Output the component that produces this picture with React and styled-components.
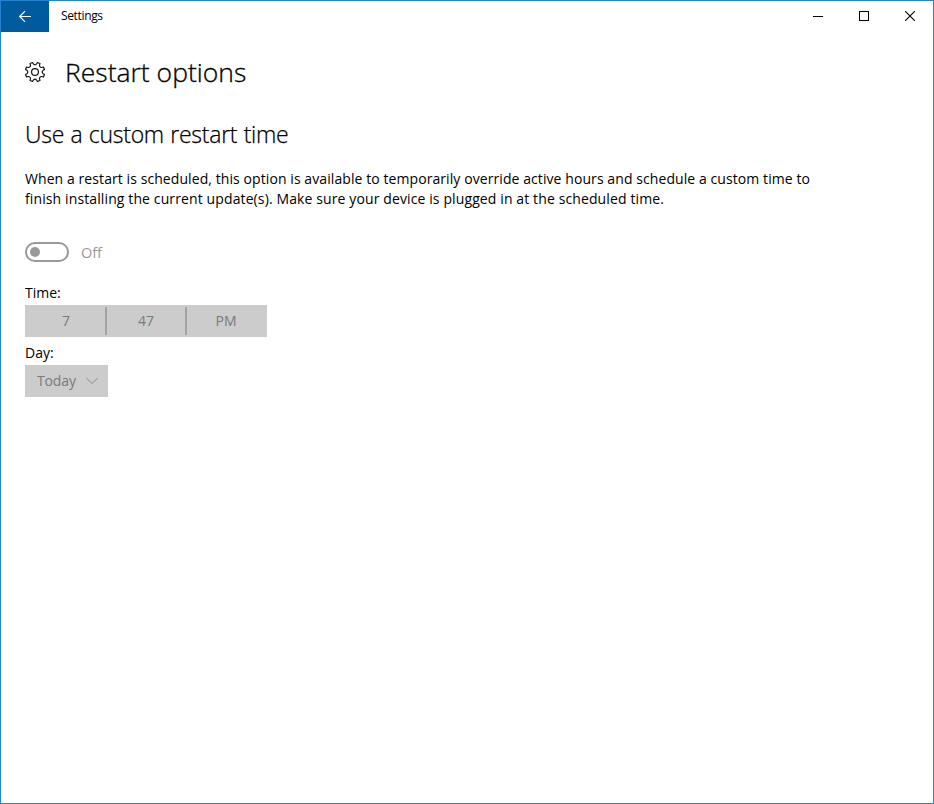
import React from "react";
import styled, { createGlobalStyle } from "styled-components";

const GlobalStyle = createGlobalStyle`
  * { box-sizing: border-box; }
  body { margin: 0; background: #fff; }
`;

const Window = styled.div`
  width: 934px;
  height: 804px;
  border: 1px solid #2583d3;
  background: #fff;
  color: #000;
  font-family: "Open Sans", "Noto Sans", sans-serif;
  overflow: hidden;
`;

const TitleBar = styled.header`
  display: flex;
  height: 31px;
`;

const BackButton = styled.button`
  display: flex;
  align-items: center;
  justify-content: center;
  width: 48px;
  height: 31px;
  padding: 0 0 2px;
  border: 0;
  background: #005a9e;
`;

const WindowTitle = styled.div`
  flex: 1;
  padding-left: 12px;
  font-size: 12px;
  line-height: 30px;
  letter-spacing: -0.35px;
`;

const CaptionButton = styled.button`
  display: flex;
  align-items: center;
  justify-content: center;
  width: 46px;
  height: 30px;
  padding: 0;
  border: 0;
  background: transparent;
`;

const Content = styled.main`
  padding: 20px 24px 0;
`;

const PageHeader = styled.div`
  display: flex;
  align-items: center;
  height: 40px;
  gap: 20px;
`;

const PageTitle = styled.h1`
  margin: 0;
  font-size: 26.5px;
  font-weight: 300;
  line-height: 40px;
  -webkit-text-stroke: 0.3px #000;
  white-space: nowrap;
`;

const SectionTitle = styled.h2`
  margin: 26px 0 0;
  font-size: 23px;
  font-weight: 300;
  line-height: 32px;
  letter-spacing: -0.27px;
  word-spacing: 0.7px;
  -webkit-text-stroke: 0.25px #000;
  white-space: nowrap;
`;

const Description = styled.p`
  margin: 19px 0 0;
  font-size: 14px;
  line-height: 20px;
`;

const Line = styled.span`
  display: block;
  width: max-content;
  white-space: nowrap;
  letter-spacing: ${(p) => p.$tracking};
`;

const ToggleRow = styled.div`
  display: flex;
  align-items: center;
  height: 20px;
  margin-top: 33px;
  gap: 12px;
`;

const Toggle = styled.div`
  display: flex;
  align-items: center;
  width: 44px;
  height: 20px;
  padding-left: 3px;
  border: 2px solid #999;
  border-radius: 10px;
`;

const Knob = styled.div`
  width: 10px;
  height: 10px;
  border-radius: 50%;
  background: #999;
`;

const ToggleLabel = styled.span`
  padding-top: 2px;
  color: #999;
  font-size: 14.5px;
  line-height: 20px;
  letter-spacing: -0.1px;
`;

const FieldLabel = styled.div`
  height: 20px;
  margin-top: ${(p) => p.$top}px;
  font-size: 14px;
  line-height: 20px;
`;

const TimePicker = styled.div`
  display: flex;
  align-items: center;
  width: 242px;
  height: 32px;
  margin-top: 2px;
  background: #ccc;
`;

const TimePart = styled.div`
  flex: 0 0 ${(p) => p.$width}px;
  padding: ${(p) => p.$inset || "0"};
  color: #7a7a7a;
  font-size: 14px;
  line-height: 32px;
  text-align: center;
  letter-spacing: -0.1px;
`;

const Divider = styled.div`
  width: 2px;
  height: 28px;
  background: #a3a3a3;
`;

const DaySelect = styled.div`
  display: flex;
  align-items: center;
  justify-content: space-between;
  width: 83px;
  height: 32px;
  margin-top: 2px;
  padding: 0 10px 0 12px;
  background: #ccc;
  color: #7a7a7a;
  font-size: 14px;
  line-height: 32px;
  letter-spacing: -0.15px;
`;

const toothPath = () => {
  const at = (r, deg) => {
    const a = (deg * Math.PI) / 180;
    return `${(10 + r * Math.sin(a)).toFixed(2)} ${(10 - r * Math.cos(a)).toFixed(2)}`;
  };
  let d = "";
  for (let i = 0; i < 8; i += 1) {
    const c = i * 45 + 22.5;
    d += `${i ? "L" : "M"}${at(9.8, c - 8)} L${at(9.8, c + 8)} L${at(8.2, c + 11)} Q${at(6.3, c + 22.5)} ${at(8.2, c + 34)} `;
  }
  return `${d}Z`;
};

const Gear = () => (
  <svg width="20" height="20" viewBox="0 0 20 20" fill="none" stroke="#111" strokeWidth="1.15" strokeLinejoin="round" overflow="visible">
    <path d={toothPath()} />
    <circle cx="10" cy="10" r="3.4" />
  </svg>
);

const BackArrow = () => (
  <svg width="12" height="12" viewBox="0 0 12 12" fill="none" stroke="#fff" strokeWidth="1.2">
    <path d="M12 6.5H.8M6 1.2.7 6.5 6 11.8" />
  </svg>
);

export default function App() {
  return (
    <>
      <GlobalStyle />
      <Window>
        <TitleBar>
          <BackButton aria-label="Back"><BackArrow /></BackButton>
          <WindowTitle>Settings</WindowTitle>
          <CaptionButton aria-label="Minimize">
            <svg width="10" height="10" shapeRendering="crispEdges"><path d="M0 5.5H10" stroke="#000" /></svg>
          </CaptionButton>
          <CaptionButton aria-label="Maximize">
            <svg width="10" height="10" shapeRendering="crispEdges"><path d="M.5.5h9v9h-9z" fill="none" stroke="#000" /></svg>
          </CaptionButton>
          <CaptionButton aria-label="Close">
            <svg width="10" height="10"><path d="M0 0 10 10M10 0 0 10" stroke="#000" strokeWidth="1.1" /></svg>
          </CaptionButton>
        </TitleBar>
        <Content>
          <PageHeader>
            <Gear />
            <PageTitle>Restart options</PageTitle>
          </PageHeader>
          <SectionTitle>Use a custom restart time</SectionTitle>
          <Description>
            <Line $tracking="0.08px">When a restart is scheduled, this option is available to temporarily override active hours and schedule a custom time to</Line>
            <Line $tracking="0.115px">finish installing the current update(s). Make sure your device is plugged in at the scheduled time.</Line>
          </Description>
          <ToggleRow>
            <Toggle><Knob /></Toggle>
            <ToggleLabel>Off</ToggleLabel>
          </ToggleRow>
          <FieldLabel $top={21}>Time:</FieldLabel>
          <TimePicker>
            <TimePart $width={80} $inset="0 0 0 2px">7</TimePart>
            <Divider />
            <TimePart $width={78}>47</TimePart>
            <Divider />
            <TimePart $width={80} $inset="0 2px 0 0">PM</TimePart>
          </TimePicker>
          <FieldLabel $top={6}>Day:</FieldLabel>
          <DaySelect>
            <span>Today</span>
            <svg width="12" height="8" viewBox="0 0 12 8" fill="none" stroke="#8a8a8a"><path d="M.4 1 6 6.6 11.6 1" /></svg>
          </DaySelect>
        </Content>
      </Window>
    </>
  );
}
